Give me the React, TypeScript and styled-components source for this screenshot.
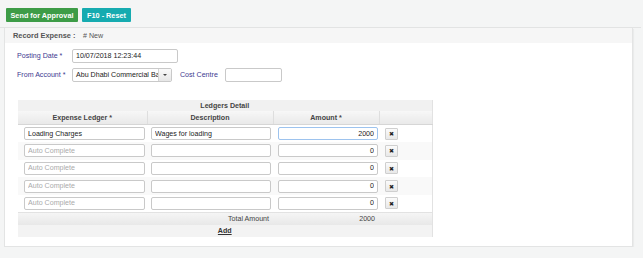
import React from "react";
import styled, { createGlobalStyle } from "styled-components";

const Global = createGlobalStyle`
  html, body { margin: 0; padding: 0; }
  body {
    background: #f4f5f5;
    font-family: "Liberation Sans", Arial, sans-serif;
    font-size: 7.1px;
    color: #333;
  }
`;

const Toolbar = styled.div`
  display: flex;
  gap: 4px;
  height: 19px;
  padding: 8px 0 0 6px;
  margin-right: 2px;
  border-bottom: 1px solid #e2e3e3;
`;

const ToolButton = styled.button<{ $tone: "green" | "teal" }>`
  height: 14px;
  padding: 0;
  border: none;
  border-radius: 1px;
  font-family: inherit;
  font-size: 7.3px;
  font-weight: bold;
  white-space: nowrap;
  color: #fff;
  background: ${(p) => (p.$tone === "green" ? "#3d9c47" : "#16abb0")};
  width: ${(p) => (p.$tone === "green" ? "72px" : "49px")};
  display: flex;
  align-items: center;
  justify-content: center;
`;

const Panel = styled.div`
  margin: 0 10px 0 4px;
  height: 218px;
  background: #fff;
  border: 1px solid #e3e4e4;
  border-top: none;
  box-shadow: 1px 1px 1px rgba(0, 0, 0, 0.04);
`;

const PanelHeader = styled.div`
  height: 15px;
  background: #f6f6f6;
  display: flex;
  align-items: center;
  padding-left: 8px;
`;

const HeaderTitle = styled.span`
  font-weight: bold;
  color: #555;
  font-size: 7.4px;
  width: 70px;
`;

const HeaderTag = styled.span`
  color: #555;
`;

const PanelBody = styled.div`
  padding: 6px 0 0 12px;
  display: flex;
  flex-direction: column;
`;

const FormRow = styled.div<{ $mt: number }>`
  display: flex;
  align-items: center;
  margin-top: ${(p) => p.$mt}px;
`;

const Label = styled.span<{ $w: number }>`
  width: ${(p) => p.$w}px;
  color: #3d3a90;
`;

const TextInput = styled.input<{ $w: number }>`
  box-sizing: border-box;
  width: ${(p) => p.$w}px;
  height: 14px;
  border: 1px solid #c9c9c9;
  border-radius: 2px;
  padding: 0 3px;
  font-family: inherit;
  font-size: 7.1px;
  color: #222;
  outline: none;
  background: #fff;
`;

const SelectBox = styled.div`
  display: flex;
  width: 100px;
  height: 14px;
  box-sizing: border-box;
  border: 1px solid #c9c9c9;
  border-radius: 2px;
  overflow: hidden;
  margin-right: 8px;
`;

const SelectText = styled.span`
  flex: 1;
  min-width: 0;
  padding-left: 3px;
  display: flex;
  align-items: center;
  white-space: nowrap;
  overflow: hidden;
  color: #222;
`;

const SelectButton = styled.span`
  width: 12px;
  flex: none;
  border-left: 1px solid #d4d4d4;
  background: linear-gradient(#fafafa, #e6e6e6);
  display: flex;
  align-items: center;
  justify-content: center;
  &::after {
    content: "";
    border-left: 2px solid transparent;
    border-right: 2px solid transparent;
    border-top: 2px solid #444;
  }
`;

const Table = styled.table`
  margin: 18px 0 0 1px;
  width: 414px;
  border-collapse: collapse;
  table-layout: fixed;
  border-right: 1px solid #e2e2e2;
`;

const CaptionCell = styled.th`
  height: 11px;
  padding: 0;
  background: #f1f1f1;
  font-weight: bold;
  color: #444;
`;

const HeadCell = styled.th`
  height: 13px;
  padding: 0;
  background: linear-gradient(#f7f7f7, #e9e9e9);
  border-left: 1px solid #dedede;
  border-bottom: 1px solid #d6d6d6;
  font-weight: bold;
  color: #444;
  &:first-child { border-left: none; }
`;

const Row = styled.tr<{ $alt: boolean }>`
  background: ${(p) => (p.$alt ? "#f9f9f9" : "#fff")};
`;

const Cell = styled.td<{ $pl: number; $pr: number }>`
  height: 17.6px;
  padding: 0 ${(p) => p.$pr}px 0 ${(p) => p.$pl}px;
  box-sizing: border-box;
`;

const GridInput = styled.input<{ $right?: boolean; $focus?: boolean }>`
  box-sizing: border-box;
  width: 100%;
  height: 13px;
  border: 1px solid ${(p) => (p.$focus ? "#9dc3ee" : "#c9c9c9")};
  border-radius: 2px;
  padding: 0 3px;
  font-family: inherit;
  font-size: 7.1px;
  color: #222;
  text-align: ${(p) => (p.$right ? "right" : "left")};
  outline: none;
  background: #fff;
  display: block;
  &::placeholder { color: #aaa; }
`;

const DeleteButton = styled.button`
  width: 13px;
  height: 12px;
  padding: 0;
  border: 1px solid #cfcfcf;
  border-radius: 1px;
  background: linear-gradient(#fbfbfb, #e8e8e8);
  color: #222;
  font-size: 6px;
  display: flex;
  align-items: center;
  justify-content: center;
`;

const FootRow = styled.tr`
  background: linear-gradient(#f5f5f5, #e8e8e8);
  border-top: 1px solid #e2e2e2;
`;

const FootCell = styled.td<{ $right?: boolean }>`
  height: 12px;
  padding: 0 4px;
  text-align: ${(p) => (p.$right ? "right" : "left")};
  color: #444;
`;

const AddRow = styled.tr`
  background: #f3f3f3;
`;

const AddCell = styled.td`
  height: 12px;
  padding: 0;
  text-align: center;
`;

const AddLink = styled.a`
  font-weight: bold;
  color: #333;
  text-decoration: underline;
`;

const rows = [
  { ledger: "Loading Charges", desc: "Wages for loading", amount: "2000", focus: true },
  { ledger: "", desc: "", amount: "0" },
  { ledger: "", desc: "", amount: "0" },
  { ledger: "", desc: "", amount: "0" },
  { ledger: "", desc: "", amount: "0" },
];

export default function App() {
  return (
    <>
      <Global />
      <Toolbar>
        <ToolButton $tone="green">Send for Approval</ToolButton>
        <ToolButton $tone="teal">F10 - Reset</ToolButton>
      </Toolbar>
      <Panel>
        <PanelHeader>
          <HeaderTitle>Record Expense :</HeaderTitle>
          <HeaderTag># New</HeaderTag>
        </PanelHeader>
        <PanelBody>
          <FormRow $mt={0}>
            <Label $w={55}>Posting Date *</Label>
            <TextInput $w={106} defaultValue="10/07/2018 12:23:44" />
          </FormRow>
          <FormRow $mt={5}>
            <Label $w={55}>From Account *</Label>
            <SelectBox>
              <SelectText>Abu Dhabi Commercial Bank</SelectText>
              <SelectButton />
            </SelectBox>
            <Label $w={45}>Cost Centre</Label>
            <TextInput $w={57} />
          </FormRow>
          <Table>
            <colgroup>
              <col style={{ width: 129 }} />
              <col style={{ width: 126 }} />
              <col style={{ width: 106 }} />
              <col style={{ width: 53 }} />
            </colgroup>
            <thead>
              <tr>
                <CaptionCell colSpan={4}>Ledgers Detail</CaptionCell>
              </tr>
              <tr>
                <HeadCell>Expense Ledger *</HeadCell>
                <HeadCell>Description</HeadCell>
                <HeadCell>Amount *</HeadCell>
                <HeadCell />
              </tr>
            </thead>
            <tbody>
              {rows.map((r, i) => (
                <Row key={i} $alt={i % 2 === 1}>
                  <Cell $pl={6} $pr={2}>
                    <GridInput defaultValue={r.ledger} placeholder="Auto Complete" />
                  </Cell>
                  <Cell $pl={4} $pr={2}>
                    <GridInput defaultValue={r.desc} />
                  </Cell>
                  <Cell $pl={5} $pr={1}>
                    <GridInput $right $focus={r.focus} defaultValue={r.amount} />
                  </Cell>
                  <Cell $pl={6} $pr={0}>
                    <DeleteButton>✖</DeleteButton>
                  </Cell>
                </Row>
              ))}
              <FootRow>
                <FootCell colSpan={2} $right>Total Amount</FootCell>
                <FootCell $right>2000</FootCell>
                <FootCell />
              </FootRow>
              <AddRow>
                <AddCell colSpan={4}>
                  <AddLink>Add</AddLink>
                </AddCell>
              </AddRow>
            </tbody>
          </Table>
        </PanelBody>
      </Panel>
    </>
  );
}
